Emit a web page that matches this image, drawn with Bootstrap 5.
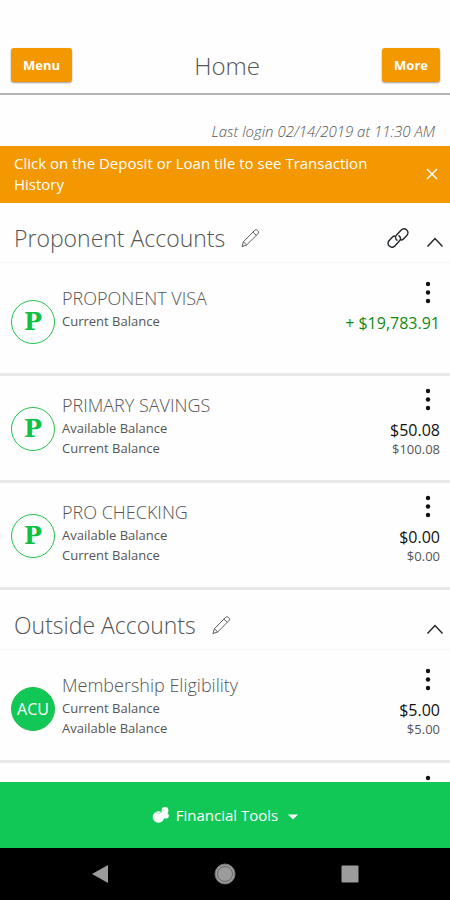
<!DOCTYPE html>
<html lang="en">
<head>
<meta charset="utf-8">
<meta name="viewport" content="width=device-width, initial-scale=1">
<title>Home</title>
<link href="https://cdn.jsdelivr.net/npm/bootstrap@5.3.0/dist/css/bootstrap.min.css" rel="stylesheet">
<style>
  body { font-family: "Open Sans", "Noto Sans", sans-serif; color: #555; background: #fefefe; }
  svg { display: block; }
  .top-bar { padding: 48px 10px 9px 11px; border-bottom: 2px solid #b4b4b4; }
  .page-title { font-size: 24px; line-height: 36px; font-weight: 300; }
  .btn-orange { --bs-btn-color: #fff; --bs-btn-bg: #f39800; --bs-btn-hover-color: #fff; --bs-btn-hover-bg: #dd8a00; --bs-btn-border-width: 0; --bs-btn-border-radius: 3px; --bs-btn-padding-x: 12px; --bs-btn-padding-y: 7px; --bs-btn-font-size: 13px; --bs-btn-line-height: 20px; --bs-btn-font-weight: 700; box-shadow: 0 1px 2px rgba(0,0,0,.4); }
  .last-login { padding: 26px 15px 4px; font-size: 15px; line-height: 21px; font-weight: 300; }
  .notice { background: #f39800; color: #fff; padding: 7px 10px 8px 14px; font-size: 15px; line-height: 21px; font-weight: 500; }
  .notice-text { max-width: 385px; }
  .plain-btn { background: none; border: 0; padding: 0; color: inherit; }
  .section-head { padding: 10px 6px 0 14px; height: 60px; border-bottom: 1px solid #f7f7f7; }
  .section-title { font-size: 23px; line-height: 32px; font-weight: 300; }
  .account-list { padding-top: 6px; }
  .account { min-height: 107px; padding: 0 10px 18px 11px; border-bottom: 3px solid #e8e8e8; }
  .avatar { width: 44px; height: 44px; margin-top: 31px; border: 1px solid #24c04e; color: #10c040; }
  .avatar-p { font: 700 24px/1 "DejaVu Serif", serif; }
  .avatar-solid { background: #11c856; color: #fff; font-size: 16px; }
  .info { padding: 17px 0 0 7px; }
  .account-name { font-size: 18px; line-height: 25px; font-weight: 300; }
  .balance-label { font-size: 13px; line-height: 20px; }
  .amounts { padding-top: 11px; }
  .dots { padding: 0 8px; margin-bottom: 9px; color: #111; }
  .amount { font-size: 16px; line-height: 20px; font-weight: 500; color: #111; }
  .amount-plus { color: #118a11; }
  .amount-small { font-size: 13px; line-height: 18px; }
  .tools { background: #11c856; color: #fff; height: 66px; font-size: 15px; font-weight: 500; gap: 6px; }
  .system-nav { background: #000; height: 52px; padding: 0 38px; }
  .system-nav .plain-btn { width: 124px; }
</style>
<script src="https://cdn.jsdelivr.net/npm/bootstrap@5.3.0/dist/js/bootstrap.bundle.min.js"></script>
</head>
<body class="d-flex flex-column vh-100 overflow-hidden">
<svg width="0" height="0" class="d-none" aria-hidden="true">
  <symbol id="pencil" viewBox="0 0 20 20"><path d="M1 19l1.500-5L14 2.300c1.200-1.200 2.300-1.200 3.500-.2s1.300 2.300.2 3.500L6 17.300zM2.500 14L6 17.300M12.500 3.800l3.700 3.500" fill="none" stroke="currentColor" stroke-width="1"/></symbol>
  <symbol id="dots" viewBox="0 0 6 24"><circle cx="3" cy="4" r="2.200"/><circle cx="3" cy="12.500" r="2.200"/><circle cx="3" cy="21" r="2.200"/></symbol>
  <symbol id="chevron" viewBox="0 0 18 12"><path d="M1.500 10.500L9 2.500l7.500 8" fill="none" stroke="currentColor" stroke-width="1.400"/></symbol>
</svg>

<header class="top-bar d-flex justify-content-between align-items-start flex-shrink-0">
  <button type="button" class="btn btn-orange">Menu</button>
  <h1 class="page-title m-0">Home</h1>
  <button type="button" class="btn btn-orange">More</button>
</header>

<main class="flex-grow-1 overflow-hidden">
  <p class="last-login fst-italic text-end m-0">Last login 02/14/2019 at 11:30 AM</p>
  <div class="notice d-flex justify-content-between align-items-center" role="status">
    <div class="notice-text">Click on the Deposit or Loan tile to see Transaction History</div>
    <button type="button" class="plain-btn" aria-label="Dismiss"><svg width="16" height="16" viewBox="0 0 16 16"><path d="M3 3l10 10M13 3L3 13" stroke="currentColor" stroke-width="1.500"/></svg></button>
  </div>

  <section>
    <div class="section-head d-flex align-items-center">
      <h2 class="section-title m-0">Proponent Accounts</h2>
      <button type="button" class="plain-btn ms-3" aria-label="Rename Proponent Accounts"><svg width="19" height="20"><use href="#pencil"/></svg></button>
      <div class="d-flex align-items-center gap-3 ms-auto text-dark pt-2">
        <button type="button" class="plain-btn pb-2" aria-label="Link accounts"><svg width="24" height="24" viewBox="0 0 24 24" fill="none" stroke="currentColor" stroke-width="1.400" stroke-linecap="round"><path d="M11 14.300c-1.600-1.500-1.900-3.800-.4-5.400L15 4.300c1.700-1.800 4-1.900 5.700-.4s1.700 3.900.1 5.600l-3.300 3.500c-.7.700-1.500 1-2.400 1"/><path d="M13 9.700c1.600 1.500 1.900 3.800.4 5.400L9 19.700c-1.700 1.800-4 1.900-5.700.4s-1.700-3.900-.1-5.600L6.500 11c.7-.7 1.500-1 2.400-1"/></svg></button>
        <button type="button" class="plain-btn" aria-label="Collapse Proponent Accounts"><svg width="18" height="12"><use href="#chevron"/></svg></button>
      </div>
    </div>
    <div class="account-list">
      <article class="account d-flex">
        <div class="avatar avatar-p rounded-circle d-flex align-items-center justify-content-center flex-shrink-0">P</div>
        <div class="info flex-grow-1">
          <h3 class="account-name m-0">PROPONENT VISA</h3>
          <div class="balance-label">Current Balance</div>
        </div>
        <div class="amounts d-flex flex-column align-items-end">
          <button type="button" class="plain-btn dots" aria-label="Options"><svg width="8" height="24" fill="currentColor"><use href="#dots"/></svg></button>
          <div class="amount amount-plus">+ $19,783.91</div>
        </div>
      </article>
      <article class="account d-flex">
        <div class="avatar avatar-p rounded-circle d-flex align-items-center justify-content-center flex-shrink-0">P</div>
        <div class="info flex-grow-1">
          <h3 class="account-name m-0">PRIMARY SAVINGS</h3>
          <div class="balance-label">Available Balance</div>
          <div class="balance-label">Current Balance</div>
        </div>
        <div class="amounts d-flex flex-column align-items-end">
          <button type="button" class="plain-btn dots" aria-label="Options"><svg width="8" height="24" fill="currentColor"><use href="#dots"/></svg></button>
          <div class="amount">$50.08</div>
          <div class="amount-small">$100.08</div>
        </div>
      </article>
      <article class="account d-flex">
        <div class="avatar avatar-p rounded-circle d-flex align-items-center justify-content-center flex-shrink-0">P</div>
        <div class="info flex-grow-1">
          <h3 class="account-name m-0">PRO CHECKING</h3>
          <div class="balance-label">Available Balance</div>
          <div class="balance-label">Current Balance</div>
        </div>
        <div class="amounts d-flex flex-column align-items-end">
          <button type="button" class="plain-btn dots" aria-label="Options"><svg width="8" height="24" fill="currentColor"><use href="#dots"/></svg></button>
          <div class="amount">$0.00</div>
          <div class="amount-small">$0.00</div>
        </div>
      </article>
    </div>
  </section>

  <section>
    <div class="section-head d-flex align-items-center">
      <h2 class="section-title m-0">Outside Accounts</h2>
      <button type="button" class="plain-btn ms-3" aria-label="Rename Outside Accounts"><svg width="19" height="20"><use href="#pencil"/></svg></button>
      <button type="button" class="plain-btn ms-auto text-dark pt-2" aria-label="Collapse Outside Accounts"><svg width="18" height="12"><use href="#chevron"/></svg></button>
    </div>
    <div class="account-list">
      <article class="account d-flex">
        <div class="avatar avatar-solid rounded-circle d-flex align-items-center justify-content-center flex-shrink-0">ACU</div>
        <div class="info flex-grow-1">
          <h3 class="account-name m-0">Membership Eligibility</h3>
          <div class="balance-label">Current Balance</div>
          <div class="balance-label">Available Balance</div>
        </div>
        <div class="amounts d-flex flex-column align-items-end">
          <button type="button" class="plain-btn dots" aria-label="Options"><svg width="8" height="24" fill="currentColor"><use href="#dots"/></svg></button>
          <div class="amount">$5.00</div>
          <div class="amount-small">$5.00</div>
        </div>
      </article>
      <article class="account d-flex">
        <div class="amounts d-flex flex-column align-items-end ms-auto">
          <button type="button" class="plain-btn dots" aria-label="Options"><svg width="8" height="24" fill="currentColor"><use href="#dots"/></svg></button>
        </div>
      </article>
    </div>
  </section>
</main>

<button type="button" class="plain-btn tools d-flex align-items-center justify-content-center flex-shrink-0 w-100">
  <svg width="18" height="18" viewBox="0 0 18 18" fill="#fff"><circle cx="6.500" cy="11" r="5.800"/><circle cx="13" cy="4.500" r="3.400"/><circle cx="14" cy="9.800" r="2.800"/><path d="M10.500 6.500l3 1.500" stroke="#fff" stroke-width="3"/><path d="M4 6.500l3 1 3-1.500M10.500 3.500l2 1.500" fill="none" stroke="#8fe6ae" stroke-width="1"/></svg>
  <span>Financial Tools</span>
  <svg class="ms-1 mt-1" width="10" height="6" viewBox="0 0 10 6" fill="#fff"><path d="M0 .5h10L5 5.500z"/></svg>
</button>

<nav class="system-nav d-flex justify-content-between align-items-center flex-shrink-0" aria-label="System">
  <button type="button" class="plain-btn d-flex justify-content-center" aria-label="Back"><svg width="16" height="18" viewBox="0 0 16 18"><path d="M0 9L16 0v18z" fill="#9c9c9c"/></svg></button>
  <button type="button" class="plain-btn d-flex justify-content-center" aria-label="Home"><svg width="22" height="22" viewBox="0 0 22 22"><circle cx="11" cy="11" r="10" fill="#9c9c9c" stroke="#777" stroke-width="1"/><circle cx="11" cy="11" r="7.500" fill="none" stroke="#666" stroke-width="1"/></svg></button>
  <button type="button" class="plain-btn d-flex justify-content-center" aria-label="Recent apps"><svg width="18" height="18" viewBox="0 0 18 18"><rect x=".5" y=".5" width="17" height="17" rx="1" fill="#9c9c9c"/></svg></button>
</nav>
</body>
</html>
